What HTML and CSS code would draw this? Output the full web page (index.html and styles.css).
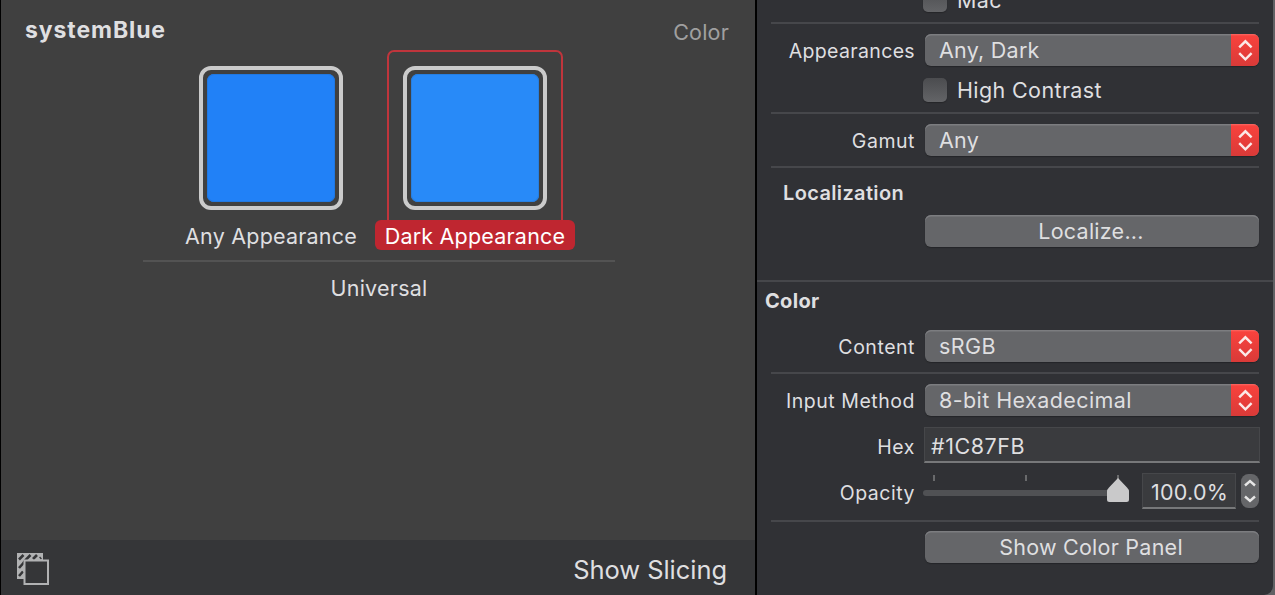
FILE: index.html
```html
<!DOCTYPE html>
<html lang="en">
<head>
<meta charset="utf-8">
<title>systemBlue</title>
<link rel="stylesheet" href="styles.css">
</head>
<body>
<svg class="defs" width="0" height="0">
  <symbol id="updown" viewBox="0 0 28 32">
    <path d="M8.200 13.400 14.400 7.300 20.600 13.400M8.200 19.200 14.400 25.300 20.600 19.200" fill="none" stroke="#fbe9e8" stroke-width="2.400"/>
  </symbol>
</svg>
<div class="window">
  <main class="editor">
    <header class="editor-header">
      <h1 class="asset-name"><span>systemBlue</span></h1>
      <span class="asset-kind">Color</span>
    </header>
    <section class="wells">
      <figure class="well">
        <div class="frame"><div class="ring"><div class="swatch swatch-any"></div></div></div>
        <figcaption class="caption">Any Appearance</figcaption>
      </figure>
      <figure class="well well-selected">
        <div class="frame"><div class="ring"><div class="swatch swatch-dark"></div></div></div>
        <figcaption class="caption">Dark Appearance</figcaption>
      </figure>
    </section>
    <div class="idiom">Universal</div>
    <footer class="bottom-bar">
      <svg class="slices-icon" width="34" height="34" viewBox="0 0 34 34">
        <rect x="1" y="1" width="26" height="26" fill="#b1b2b3"/>
        <path d="M3 7.500 7.500 3M3 16 7 11.500 10 7.500 14.500 3M17 7 21 3M3 24 7 19.500M24 6.500 25 5.500" fill="none" stroke="#353638" stroke-width="2.600"/>
        <rect x="8.500" y="8.500" width="23.500" height="23.500" fill="#353638" stroke="#b1b2b3" stroke-width="2"/>
      </svg>
      <span class="show-slicing">Show Slicing</span>
    </footer>
  </main>
  <aside class="inspector">
    <div class="row row-mac"><span class="checkbox"></span><span class="check-label">Mac</span></div>
    <hr class="rule">
    <div class="row"><label class="label label-long">Appearances</label><div class="popup"><span class="value tight">Any, Dark</span><svg class="arrows"><use href="#updown"/></svg></div></div>
    <div class="row row-check"><span class="checkbox"></span><span class="check-label">High Contrast</span></div>
    <hr class="rule">
    <div class="row"><label class="label">Gamut</label><div class="popup"><span class="value tight">Any</span><svg class="arrows"><use href="#updown"/></svg></div></div>
    <hr class="rule">
    <h2 class="subheading">Localization</h2>
    <div class="row"><button class="button">Localize...</button></div>
    <hr class="rule rule-full">
    <h2 class="heading">Color</h2>
    <div class="row"><label class="label">Content</label><div class="popup"><span class="value">sRGB</span><svg class="arrows"><use href="#updown"/></svg></div></div>
    <hr class="rule">
    <div class="row"><label class="label">Input Method</label><div class="popup"><span class="value">8-bit Hexadecimal</span><svg class="arrows"><use href="#updown"/></svg></div></div>
    <div class="row row-hex"><label class="label">Hex</label><div class="field field-hex">#1C87FB</div></div>
    <div class="row row-opacity">
      <label class="label">Opacity</label>
      <svg class="slider" width="208" height="36" viewBox="0 0 208 36">
        <path d="M11 2v6M103 2v6M195 2v6" stroke="#696a6c" stroke-width="2"/>
        <rect x="0" y="17" width="200" height="6" rx="3" fill="#505154"/>
        <path d="M195 5 204 14.500Q206 16.500 206 18.500V26.500Q206 29 203.500 29H186.500Q184 29 184 26.500V18.500Q184 16.500 186 14.500Z" fill="#c9c9ca"/>
      </svg>
      <div class="field field-opacity tight">100.0%</div>
      <svg class="stepper" width="18" height="34" viewBox="0 0 18 34">
        <rect width="18" height="34" rx="7.500" fill="#656669"/>
        <path d="M4 11.500 9 7 14 11.500M4 22.500 9 27 14 22.500" fill="none" stroke="#e6e6e6" stroke-width="2.400"/>
      </svg>
    </div>
    <hr class="rule rule-tight">
    <div class="row"><button class="button">Show Color Panel</button></div>
  </aside>
</div>
</body>
</html>
```
FILE: styles.css
```css
* { box-sizing: border-box; }
body { margin: 0; background: #303135; font-family: Inter, "Liberation Sans", sans-serif; color: #dfdfe0; }
.defs { display: block; height: 0; }
.window { display: flex; width: 1275px; height: 595px; overflow: hidden; background: #606164; }

.editor { display: flex; flex-direction: column; width: 757px; height: 595px; background: #404040; border-left: 1px solid #000; border-right: 2px solid #000; }
.editor-header { display: flex; justify-content: space-between; height: 50px; padding: 0 26px 0 24px; }
.asset-name { margin: 0; font-size: 23px; line-height: 61px; font-weight: 700; letter-spacing: 0.9px; }
.asset-kind { font-size: 21.500px; line-height: 65px; color: #a0a0a0; letter-spacing: 0.2px; }
.wells { display: flex; justify-content: space-between; width: 472px; height: 212px; margin-left: 142px; padding: 0 40px 0 28px; border-bottom: 2px solid #535353; }
.well { display: flex; flex-direction: column; align-items: center; width: 200px; margin: 0; }
.frame { width: 176px; height: 170px; padding: 14px; border: 2px solid transparent; border-bottom: 0; border-radius: 7px 7px 0 0; }
.well-selected .frame { border-color: #c0353c; }
.ring { width: 144px; height: 144px; padding: 4px; border: 4px solid #cbcbcb; border-radius: 12px; }
.swatch { width: 128px; height: 128px; border-radius: 7px; }
.swatch-any { background: #2181f7; box-shadow: inset 0 0 0 1px #2078e2; }
.swatch-dark { background: #288af8; box-shadow: inset 0 0 0 1px #267fe2; }
.caption { width: 200px; height: 30px; border-radius: 6px; font-size: 21.500px; line-height: 33px; text-align: center; white-space: nowrap; letter-spacing: 0.2px; }
.well-selected .caption { background: #bf2630; color: #fff; }
.idiom { width: 472px; margin-left: 142px; font-size: 21.500px; line-height: 52px; text-align: center; letter-spacing: 0.250px; }
.bottom-bar { display: flex; justify-content: space-between; height: 55px; margin-top: auto; padding: 12px 28px 0 15px; background: #353638; }
.show-slicing { font-size: 25.500px; line-height: 36px; letter-spacing: -0.050px; }

.inspector { width: 516px; height: 595px; padding: 0 14px; background: #303135; border-radius: 0 0 9px 0; }
.row { display: flex; height: 32px; }
.label { width: 144px; height: 32px; padding-top: 1px; margin-right: 10px; font-size: 19.500px; line-height: 32px; text-align: right; white-space: nowrap; letter-spacing: 0.530px; }
.label-long { letter-spacing: 0.350px; }
.rule { height: 2px; margin: 10px 0; border: 0; background: #46474b; }
.rule-full { margin: 33px -14px 0; }
.rule-tight { margin: 11px 0 9px; }
.row-mac { height: 12px; align-items: flex-end; margin-left: 152px; }
.row-check { height: 24px; margin: 12px 0 0 152px; }
.checkbox { flex: none; width: 24px; height: 24px; margin-right: 10px; border-radius: 5px; background: linear-gradient(#4b4c4f, #636467); box-shadow: 0 1px 1px #252629; }
.check-label { font-size: 21.500px; line-height: 24px; letter-spacing: 0.380px; }
.popup { display: flex; justify-content: space-between; width: 334px; height: 32px; padding-left: 14px; overflow: hidden; border-radius: 6px; background: #656669; box-shadow: 0 1px 1px #242528, inset 0 1.500px 0 #7c7d80; }
.value { font-size: 21.500px; line-height: 33px; letter-spacing: 0.420px; white-space: nowrap; }
.arrows { width: 28px; height: 32px; background: linear-gradient(#fa6a64 0, #f8423d 2px, #d93a38 100%); }
.button { width: 334px; height: 32px; margin-left: 154px; padding: 0 2px 0 0; border: 0; border-radius: 6px; background: #656669; box-shadow: 0 1px 1px #242528, inset 0 1.500px 0 #7c7d80; color: #dfdfe0; font: 21.500px/33px Inter, "Liberation Sans", sans-serif; letter-spacing: 0.250px; }
.subheading { height: 37px; margin: 0 0 0 12px; font-size: 20px; line-height: 30px; font-weight: 600; letter-spacing: 0.350px; }
.heading { height: 48px; margin: 0 0 0 -6px; font-size: 20px; line-height: 38px; font-weight: 700; letter-spacing: 0.3px; }
.row-hex { height: 36px; margin-top: 11px; }
.row-hex .label, .row-opacity .label { height: 36px; padding-top: 4px; }
.row-opacity { height: 36px; margin-top: 10px; }
.field { height: 36px; border: 2px solid #46474a; border-width: 1px 1px 2px; border-bottom-color: #77787a; background: #3a3b3e; font-size: 21.500px; line-height: 36px; letter-spacing: 0.550px; white-space: nowrap; }
.field-hex { width: 336px; margin: 0 -1px; padding-left: 6px; }
.slider { display: block; margin-left: -2px; }
.field-opacity { width: 94px; margin-left: 11px; padding-left: 8px; }
.stepper { display: block; margin: 1px 0 0 5px; }
.tight { letter-spacing: 0.250px; }
```
